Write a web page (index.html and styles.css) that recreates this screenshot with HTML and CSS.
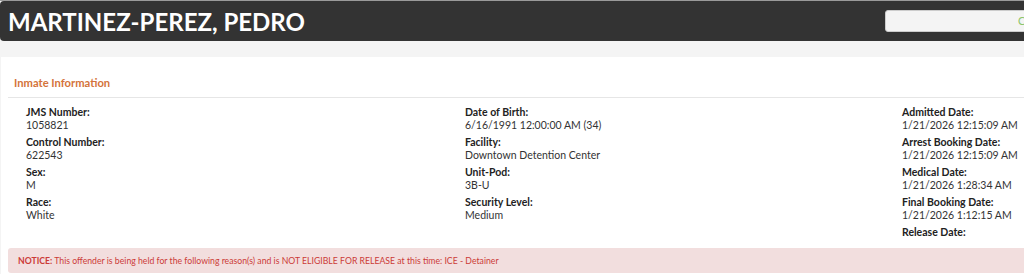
FILE: index.html
```html
<!DOCTYPE html>
<html lang="en">
<head>
    <meta charset="UTF-8">
    <meta name="viewport" content="width=device-width, initial-scale=1.0">
    <title>Inmate Details</title>
    <link rel="stylesheet" href="styles.css">
</head>
<body>
    <header class="name-bar">
        <h1>MARTINEZ-PEREZ, PEDRO</h1>
        <div class="status-box"><span>Custody</span></div>
    </header>
    <div class="page">
        <div class="panel">
            <h2 class="panel-title">Inmate Information</h2>
            <div class="info-grid">
                <div class="info-col">
                    <div class="field"><div class="label">JMS Number:</div><div class="value">1058821</div></div>
                    <div class="field"><div class="label">Control Number:</div><div class="value">622543</div></div>
                    <div class="field"><div class="label">Sex:</div><div class="value">M</div></div>
                    <div class="field"><div class="label">Race:</div><div class="value">White</div></div>
                </div>
                <div class="info-col">
                    <div class="field"><div class="label">Date of Birth:</div><div class="value">6/16/1991 12:00:00 AM (34)</div></div>
                    <div class="field"><div class="label">Facility:</div><div class="value">Downtown Detention Center</div></div>
                    <div class="field"><div class="label">Unit-Pod:</div><div class="value">3B-U</div></div>
                    <div class="field"><div class="label">Security Level:</div><div class="value">Medium</div></div>
                </div>
                <div class="info-col">
                    <div class="field"><div class="label">Admitted Date:</div><div class="value">1/21/2026 12:15:09 AM</div></div>
                    <div class="field"><div class="label">Arrest Booking Date:</div><div class="value">1/21/2026 12:15:09 AM</div></div>
                    <div class="field"><div class="label">Medical Date:</div><div class="value">1/21/2026 1:28:34 AM</div></div>
                    <div class="field"><div class="label">Final Booking Date:</div><div class="value">1/21/2026 1:12:15 AM</div></div>
                    <div class="field"><div class="label">Release Date:</div><div class="value"></div></div>
                </div>
            </div>
            <div class="notice"><b>NOTICE:</b> This offender is being held for the following reason(s) and is NOT ELIGIBLE FOR RELEASE at this time: ICE - Detainer</div>
        </div>
    </div>
</body>
</html>
```

FILE: styles.css
```css
body {
    font-family: Lato, "Open Sans", sans-serif;
    margin: 0;
    padding: 0;
    color: #333;
    background-color: #f4f4f4;
    border-top: 1px solid #9a9a9a;
    width: 1400px;
    overflow: hidden;
}
.name-bar {
    background-color: #333;
    color: white;
    height: 40px;
    border-radius: 4px 0 0 4px;
    display: flex;
    align-items: center;
    padding: 0 8px;
}
.name-bar h1 {
    margin: 0;
    font-size: 24px;
    font-weight: 700;
    flex: 1;
}
.status-box {
    width: 360px;
    height: 22px;
    margin-right: 147px;
    margin-top: -1px;
    background-color: #f4f4f4;
    border: 1px solid #ccc;
    border-radius: 3px;
    color: #8cc56b;
    font-size: 11px;
    display: flex;
    align-items: center;
    padding-left: 132px;
    box-sizing: border-box;
}
.page {
    padding-top: 16px;
    padding-left: 1px;
}
.panel {
    background-color: white;
    padding: 15px 0 2px 7px;
}
.panel-title {
    margin: 0;
    padding: 4px 0 8px 6px;
    font-size: 11.2px;
    font-weight: 700;
    color: #d4733a;
    border-bottom: 1px solid #e6e6e6;
}
.info-grid {
    display: grid;
    grid-template-columns: 439px 437px 438px;
    padding: 8px 0 5px 18px;
}
.field {
    margin-bottom: 4px;
}
.label {
    font-size: 10.5px;
    font-weight: 700;
    color: #222;
    line-height: 13px;
}
.value {
    font-size: 10.5px;
    color: #333;
    line-height: 13px;
}
.notice {
    background-color: #f2dede;
    color: #cc3b37;
    font-size: 8.7px;
    padding: 7px 10px;
    border-radius: 3px;
}
```
